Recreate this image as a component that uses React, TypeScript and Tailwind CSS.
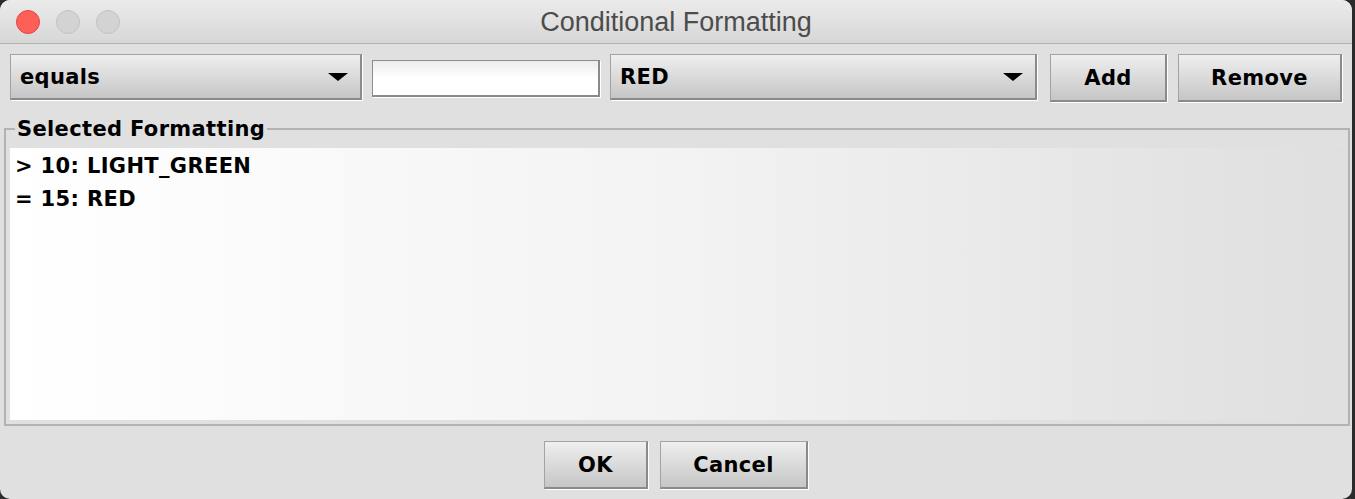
import { useState } from "react";

const font = "font-['DejaVu_Sans',sans-serif] font-bold text-[21px] tracking-[0.35px] text-black";
const bevel =
  "border-t border-l border-t-[#a3a3a3] border-l-[#a3a3a3] border-r-2 border-b-2 border-r-[#8a8a8a] border-b-[#8a8a8a] shadow-[1px_1px_0_#ffffff] bg-gradient-to-b from-[#efefef] to-[#c6c6c6]";

interface ComboProps {
  value: string;
  width: string;
}

function Combo({ value, width }: ComboProps) {
  return (
    <div className={`${width} h-[46px] ${bevel} flex items-center justify-between pl-[9px] pr-[12px]`}>
      <span className={`${font} pt-[2px]`}>{value}</span>
      <svg width="20" height="8" viewBox="0 0 20 8">
        <path d="M0 0 H20 L10 8 Z" fill="#000" />
      </svg>
    </div>
  );
}

function Button({ label, width }: { label: string; width: string }) {
  return (
    <button type="button" className={`${width} h-[48px] ${bevel} flex items-center justify-center pt-[2px] ${font}`}>
      {label}
    </button>
  );
}

export default function App() {
  const [rules] = useState(["> 10: LIGHT_GREEN", "= 15: RED"]);

  return (
    <div className="w-[1355px] h-[499px] bg-[#2b2b2b] flex overflow-hidden">
      <div className="w-[1352px] h-full rounded-[10px] bg-[#e0e0e0] overflow-hidden flex flex-col">
        <div className="h-[44px] shrink-0 border-b border-[#b2b2b2] bg-gradient-to-b from-[#ebebeb] to-[#d7d7d7] grid grid-cols-[1fr_auto_1fr] items-center">
          <div className="flex items-center gap-[16px] pl-[16px]">
            <span className="w-[24px] h-[24px] rounded-full bg-[#fe5f57] border border-[#e2463f]" />
            <span className="w-[24px] h-[24px] rounded-full bg-[#d3d3d3] border border-[#c2c2c2]" />
            <span className="w-[24px] h-[24px] rounded-full bg-[#d3d3d3] border border-[#c2c2c2]" />
          </div>
          <div className="font-['Liberation_Sans',sans-serif] text-[27px] text-[#4c4c4c] pt-[1px]">
            Conditional Formatting
          </div>
          <div />
        </div>

        <div className="flex items-start pl-[10px] pt-[10px] h-[73px] shrink-0">
          <Combo value="equals" width="w-[352px]" />
          <input
            type="text"
            className="ml-[10px] mt-[6px] w-[228px] h-[37px] border-t border-l border-t-[#8e8e8e] border-l-[#8e8e8e] border-r-2 border-b-2 border-r-[#8a8a8a] border-b-[#8a8a8a] shadow-[1px_1px_0_#ffffff] bg-gradient-to-b from-[#ececec] via-white to-white outline-none px-2"
          />
          <div className="ml-[10px]">
            <Combo value="RED" width="w-[427px]" />
          </div>
          <div className="ml-[13px]">
            <Button label="Add" width="w-[117px]" />
          </div>
          <div className="ml-[11px]">
            <Button label="Remove" width="w-[164px]" />
          </div>
        </div>

        <fieldset className="ml-[4px] mr-[2px] h-[309px] shrink-0 border-2 border-[#b3b3b3] pl-[4px] pr-[5px] pb-[4px]">
          <legend className={`${font} ml-[5px] px-[2px] leading-[24px]`}>Selected Formatting</legend>
          <div className="mt-[7px] h-[272px] bg-gradient-to-r from-white via-[#f3f3f3] to-[#dfdfdf] pl-[5px] pt-[2px]">
            {rules.map((r) => (
              <div key={r} className={`${font} leading-[33px]`}>
                {r}
              </div>
            ))}
          </div>
        </fieldset>

        <div className="flex justify-center gap-[12px] pt-[15px]">
          <Button label="OK" width="w-[104px]" />
          <Button label="Cancel" width="w-[148px]" />
        </div>
      </div>
    </div>
  );
}
